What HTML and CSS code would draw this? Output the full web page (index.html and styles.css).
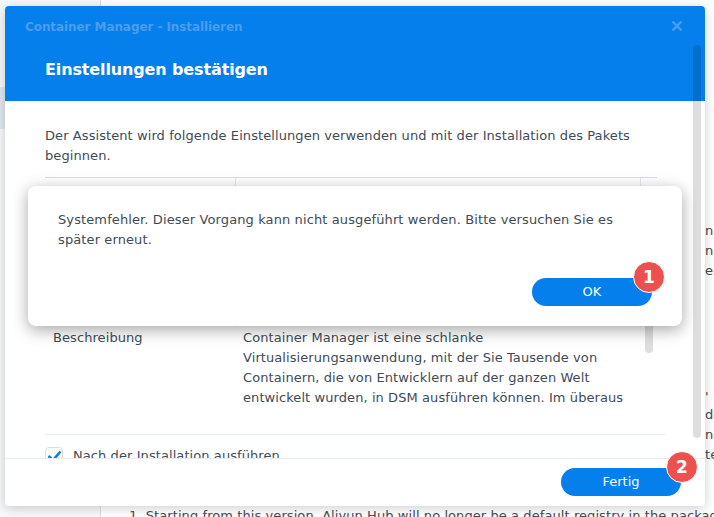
FILE: index.html
```html
<!DOCTYPE html>
<html lang="de">
<head>
<meta charset="utf-8">
<title>Container Manager - Installieren</title>
<link rel="stylesheet" href="styles.css">
</head>
<body>
<div class="desktop">
  <div class="back-nav"><div class="back-selected"></div></div>
  <div class="back-text">
    <span class="bt bt1">n</span>
    <span class="bt bt2">n</span>
    <span class="bt bt3">er</span>
    <span class="bt bt4">' <b>:</b></span>
    <span class="bt bt5">de</span>
    <span class="bt bt6">nd</span>
    <span class="bt bt7">te</span>
    <span class="bt bt8">1. Starting from this version, Aliyun Hub will no longer be a default registry in the package</span>
  </div>

  <section class="window">
    <header class="win-head">
      <div class="win-title">Container Manager - Installieren</div>
      <svg class="win-close" width="12" height="12" viewBox="0 0 12 12"><path d="M1.5 1.5l9 9M10.5 1.5l-9 9" stroke="#4a9df0" stroke-width="2.4" fill="none"/></svg>
      <h1 class="win-heading">Einstellungen bestätigen</h1>
    </header>
    <div class="win-body">
      <p class="intro">Der Assistent wird folgende Einstellungen verwenden und mit der Installation des Pakets beginnen.</p>
      <div class="table">
        <div class="table-top"><div class="cell-a"></div><div class="cell-b"></div></div>
        <div class="row">
          <div class="label">Beschreibung</div>
          <div class="value">Container Manager ist eine schlanke Virtualisierungsanwendung, mit der Sie Tausende von Containern, die von Entwicklern auf der ganzen Welt entwickelt wurden, in DSM ausführen können. Im überaus</div>
        </div>
        <div class="inner-track"></div>
      </div>
      <label class="check">
        <span class="box"><svg width="15" height="12" viewBox="0 0 15 12"><path d="M1.5 6l4.5 4.2 7.5-8.7" stroke="#057feb" stroke-width="2.6" fill="none"/></svg></span>
        Nach der Installation ausführen
      </label>
    </div>
    <footer class="win-foot">
      <button class="btn btn-fertig">Fertig</button>
    </footer>
    <div class="win-track"></div>
  </section>

  <section class="alert">
    <p class="alert-text">Systemfehler. Dieser Vorgang kann nicht ausgeführt werden. Bitte versuchen Sie es später erneut.</p>
    <div class="alert-actions"><button class="btn btn-ok">OK</button></div>
  </section>

  <span class="badge badge-1">1</span>
  <span class="badge badge-2">2</span>
</div>
</body>
</html>
```
FILE: styles.css
```css
* { box-sizing: border-box; }
html, body { margin: 0; padding: 0; }
body { font-family: "DejaVu Sans", Verdana, sans-serif; font-size: 13px; letter-spacing: .08px; color: #414b55; background: #fff; }
.desktop { position: relative; width: 714px; height: 517px; overflow: hidden; background: #fff; }

.back-nav { position: absolute; left: 0; top: 0; width: 101px; height: 517px; background: #f7f8fa; border-right: 1px solid #d9dfe6; }
.back-selected { margin-top: 87px; height: 42px; background: #dfe9f3; }
.back-text { position: absolute; top: 0; right: 0; bottom: 0; left: 0; overflow: hidden; line-height: 20px; }
.bt { position: absolute; left: 705px; white-space: nowrap; }
.bt b { color: #f0a030; font-weight: 400; }
.bt1 { top: 221px; } .bt2 { top: 241px; } .bt3 { top: 261px; }
.bt4 { top: 387px; } .bt5 { top: 405px; } .bt6 { top: 425px; } .bt7 { top: 445px; }
.bt8 { left: 129px; top: 506px; }

.window { position: absolute; left: 5px; top: 6px; width: 700px; height: 500px; background: #fff; border-radius: 4px; box-shadow: 0 2px 12px rgba(0,0,0,.2); overflow: hidden; display: flex; flex-direction: column; }
.win-head { position: relative; flex: 0 0 95px; background: #057feb; color: #fff; padding: 0 20px 0 40px; }
.win-title { position: absolute; left: 20px; top: 13px; font-weight: 700; font-size: 12px; line-height: 16px; letter-spacing: -.08px; color: #4a9df0; }
.win-close { position: absolute; left: 666px; top: 14px; }
.win-heading { margin: 0; padding-top: 53px; font-size: 16px; line-height: 22px; letter-spacing: -.13px; font-weight: 700; }
.win-body { flex: 1; min-height: 0; padding: 25px 40px 0 40px; overflow: hidden; }
.intro { margin: 0; width: 612px; line-height: 20px; }
.table { position: relative; margin-top: 11px; width: 620px; border-bottom: 1px solid #e6ecf2; }
.table-top { display: flex; width: 612px; height: 150px; border-top: 1px solid #d5dde6; }
.cell-a { width: 191px; border-right: 1px solid #e3e8ee; }
.cell-b { width: 405px; border-right: 1px solid #e3e8ee; }
.row { display: flex; height: 107px; padding: 1px 8px 0; }
.label { width: 190px; line-height: 20px; }
.value { width: 400px; line-height: 20px; }
.inner-track { position: absolute; right: 12px; bottom: 81px; width: 8px; height: 40px; background: #dedede; border-radius: 0 0 4px 4px; }
.check { display: flex; align-items: center; gap: 10px; margin-top: 11px; line-height: 20px; }
.box { flex: none; width: 18px; height: 18px; border: 1px solid #d5dde6; border-radius: 4px; display: flex; align-items: center; justify-content: center; }
.win-foot { position: relative; flex: 0 0 48px; background: #fff; border-top: 1px solid #e6ecf2; display: flex; justify-content: flex-end; padding: 9px 24px 0 0; }
.win-track { position: absolute; right: 4px; top: 39px; width: 8px; height: 393px; background: rgba(0,0,0,.13); border-radius: 4px; }

.btn { border: 0; background: #057feb; color: #fff; font: 13px/28px "DejaVu Sans", Verdana, sans-serif; height: 28px; width: 120px; border-radius: 14px; padding: 0; }

.alert { position: absolute; left: 28px; top: 186px; width: 654px; height: 140px; background: #fff; border-radius: 8px; box-shadow: 0 4px 16px rgba(0,0,0,.35); padding: 24px 30px 0; display: flex; flex-direction: column; }
.alert-text { margin: 0; width: 570px; line-height: 20px; letter-spacing: .11px; }
.alert-actions { margin-top: auto; margin-bottom: 20px; display: flex; justify-content: flex-end; }

.badge { position: absolute; width: 32px; height: 32px; border-radius: 50%; background: #ee5050; border: 1px solid #fff; color: #fff; font-weight: 700; font-size: 17px; line-height: 30px; text-align: center; }
.badge-1 { left: 633px; top: 261px; }
.badge-2 { left: 666px; top: 451px; }
```
